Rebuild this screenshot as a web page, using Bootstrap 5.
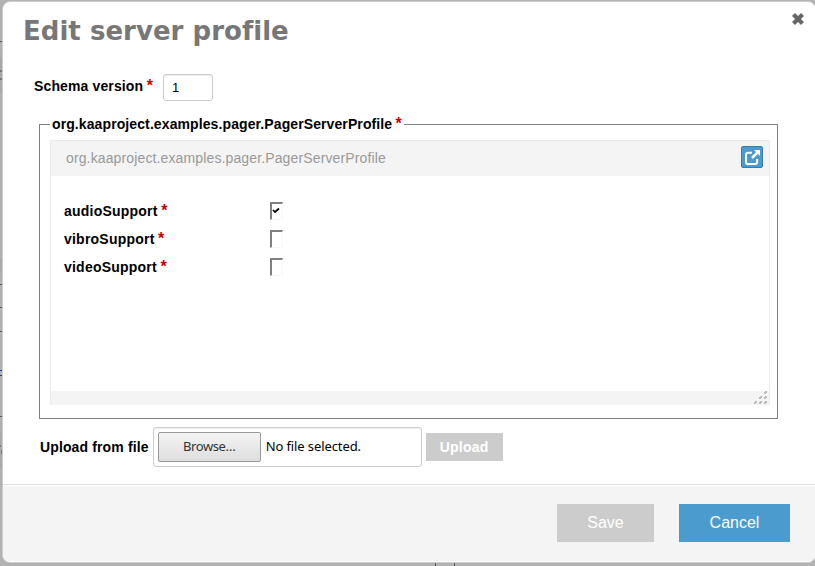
<!DOCTYPE html>
<html lang="en">
<head>
<meta charset="utf-8">
<meta name="viewport" content="width=device-width, initial-scale=1">
<title>Edit server profile</title>
<link href="https://cdn.jsdelivr.net/npm/bootstrap@5.3.0/dist/css/bootstrap.min.css" rel="stylesheet">
<style>
body{height:566px;overflow:hidden;background:#b2b2b2;font:14px/20px "Liberation Sans",Arial,sans-serif;color:#000;padding:1px 0 0 2px;letter-spacing:.13px}
.page-behind{left:0;top:0}
.dialog-box{width:814px;height:562px;border:1px solid #ccc;border-radius:8px;background:#fff;overflow:hidden}
.dialog-top{height:72px;padding:11px 10px 0 20px}
.dialog-title{font:bold 26px/36px "DejaVu Sans",sans-serif;color:#777;margin:0;white-space:nowrap;letter-spacing:.03px}
.close-x{width:14px;height:14px;padding:0;border:0;background:none;line-height:0;margin-top:-1px}
.req{color:#c00;font-size:16px;line-height:1;margin-left:-.6px}
.schema-row{height:27px;padding-left:31px}
.schema-row label{padding-bottom:4px;letter-spacing:.13px}
.schema-row .form-control{width:50px;height:27px;padding:0 8px;font-size:13px;margin-left:10px;border-radius:3px}
.form-control{border:1px solid #ccc;color:#000;box-shadow:inset 0 1px 1px rgba(0,0,0,.08)}
.record{width:739px;height:305px;margin:13px 0 0 36px;padding:0 8px 0 10px;border:1px solid gray}
.record legend{float:none;width:auto;font:bold 14px/20px "Liberation Sans",Arial,sans-serif;margin:0;padding:0 2px;height:20px;white-space:nowrap;letter-spacing:.1px}
.record-panel{width:720px;height:265px;margin:6px 0 0 0;border:1px solid #ebebeb;border-bottom:0}
.record-head{height:35px;background:#f4f4f4;padding:0 6px 2px 15px;color:#999}
.open-btn{width:22px;height:22px;padding:0;border:1px solid #3a7ca8;border-radius:2px;background:#4b9bce;line-height:0;margin-top:-1px}
.record-fields{padding:21px 0 0 13px;height:215px}
.field-row{height:28px}
.field-name{width:206px;letter-spacing:.22px}
.tick-box{appearance:none;width:13px;height:18px;margin:0;border-style:solid;border-width:2px 1px 1px 2px;border-color:gray #f7f7f7 #f7f7f7 gray;background:#fff}
.tick-box:checked{background:#fff url("data:image/svg+xml,%3Csvg xmlns='http://www.w3.org/2000/svg' width='10' height='15'%3E%3Cpath d='M1 6l2 2L7 4.500' fill='none' stroke='%23000' stroke-width='1.7'/%3E%3C/svg%3E") no-repeat}
.record-foot{height:14px;background:#f4f4f4;line-height:0}
.upload-row{height:40px;margin-top:8px;padding-left:37px}
.file-box{width:269px;height:40px;margin:0 4px;padding:0 4px;font:13px/18px "Noto Sans",sans-serif;border-radius:3px;letter-spacing:-.1px}
.file-box span{padding-bottom:2px}
.browse-btn{width:103px;height:30px;padding:0 0 2px;border:1px solid #999;border-radius:2px;background:linear-gradient(#f4f4f4,#dedede);font:inherit;letter-spacing:-.4px;color:#333;margin-right:5px}
.flat-btn{border:0;border-radius:0;padding:0;color:#fff!important;opacity:1!important}
.flat-grey{background:#ccc!important}
.upload-btn{width:77px;height:28px;font-weight:bold;font-size:14px;letter-spacing:.25px}
.dialog-foot{height:77px;margin-top:17px;border-top:1px solid #ddd;box-shadow:inset 0 1px 0 #fff;background:#f4f4f4;padding:0 25px 1px 0;gap:25px}
.dialog-foot .btn{height:38px;font-size:16px}
.save-btn{width:97px}
.cancel-btn{width:111px;background:#4b9bce!important}
</style>
</head>
<body>
<svg class="page-behind position-absolute" width="815" height="566" aria-hidden="true">
<path fill="#a9a9a9" d="M0 57h2v36H0zM0 258h2v14H0zM0 432h2v36H0z"/>
<path fill="#555" d="M0 41h2v1H0zM0 284h2v1H0zM0 307h2v1H0zM0 331h2v1H0zM0 416h2v1H0zM435 563h1v3h-1zM454 563h1v3h-1z"/>
<path fill="#777" d="M0 70h2v2H0zM0 78h2v2H0zM0 445h1v2H0zM1 450h1v4H1z"/>
<path fill="#0b4a87" d="M0 370h2v1H0zM0 375h2v1H0z"/>
</svg>
<main class="dialog-box position-relative d-flex flex-column">
  <header class="dialog-top d-flex justify-content-between align-items-start">
    <h1 class="dialog-title">Edit server profile</h1>
    <button class="close-x" type="button" aria-label="Close"><svg width="14" height="14" viewBox="0 0 14 14"><path d="M2.500 2.500l9 9M11.500 2.500l-9 9" stroke="#666" stroke-width="4.200"/></svg></button>
  </header>
  <div class="schema-row d-flex align-items-center">
    <label class="fw-bold" for="ver">Schema version <span class="req">*</span></label>
    <input class="form-control" id="ver" value="1">
  </div>
  <fieldset class="record">
    <legend>org.kaaproject.examples.pager.PagerServerProfile <span class="req">*</span></legend>
    <div class="record-panel">
      <div class="record-head d-flex align-items-center justify-content-between">
        <span>org.kaaproject.examples.pager.PagerServerProfile</span>
        <button class="open-btn" type="button" aria-label="Open"><svg width="20" height="20" viewBox="0 0 20 20" fill="none" stroke="#fff"><path d="M10 5.800H6.200Q4 5.800 4 8v7.200Q4 17 6.200 17H13q2.200 0 2.200-2.200V12" stroke-width="2"/><path d="M10 11l5.500-5.500" stroke-width="2.500"/><path d="M12 3h6v6z" fill="#fff" stroke="none"/></svg></button>
      </div>
      <div class="record-fields">
        <div class="field-row d-flex align-items-center"><label class="field-name fw-bold" for="a">audioSupport <span class="req">*</span></label><input class="tick-box" id="a" type="checkbox" checked></div>
        <div class="field-row d-flex align-items-center"><label class="field-name fw-bold" for="b">vibroSupport <span class="req">*</span></label><input class="tick-box" id="b" type="checkbox"></div>
        <div class="field-row d-flex align-items-center"><label class="field-name fw-bold" for="c">videoSupport <span class="req">*</span></label><input class="tick-box" id="c" type="checkbox"></div>
      </div>
      <div class="record-foot d-flex justify-content-end"><svg width="16" height="14" fill="#bbb"><path d="M12 0h2v2h-2zM7 5h2v2H7zM12 5h2v2h-2zM2 10h2v2H2zM7 10h2v2H7zM12 10h2v2h-2z"/><path d="M11 1h2v2h-2zM6 6h2v2H6zM11 6h2v2h-2zM1 11h2v2H1zM6 11h2v2H6zM11 11h2v2h-2z"/></svg></div>
    </div>
  </fieldset>
  <div class="upload-row d-flex align-items-center">
    <span class="fw-bold">Upload from file</span>
    <div class="file-box form-control d-flex align-items-center"><button class="browse-btn" type="button">Browse…</button><span>No file selected.</span></div>
    <button class="btn flat-btn flat-grey upload-btn" type="button" disabled>Upload</button>
  </div>
  <footer class="dialog-foot d-flex align-items-center justify-content-end">
    <button class="btn flat-btn flat-grey save-btn" type="button" disabled>Save</button>
    <button class="btn flat-btn cancel-btn" type="button">Cancel</button>
  </footer>
</main>
<script src="https://cdn.jsdelivr.net/npm/bootstrap@5.3.0/dist/js/bootstrap.bundle.min.js"></script>
</body>
</html>
